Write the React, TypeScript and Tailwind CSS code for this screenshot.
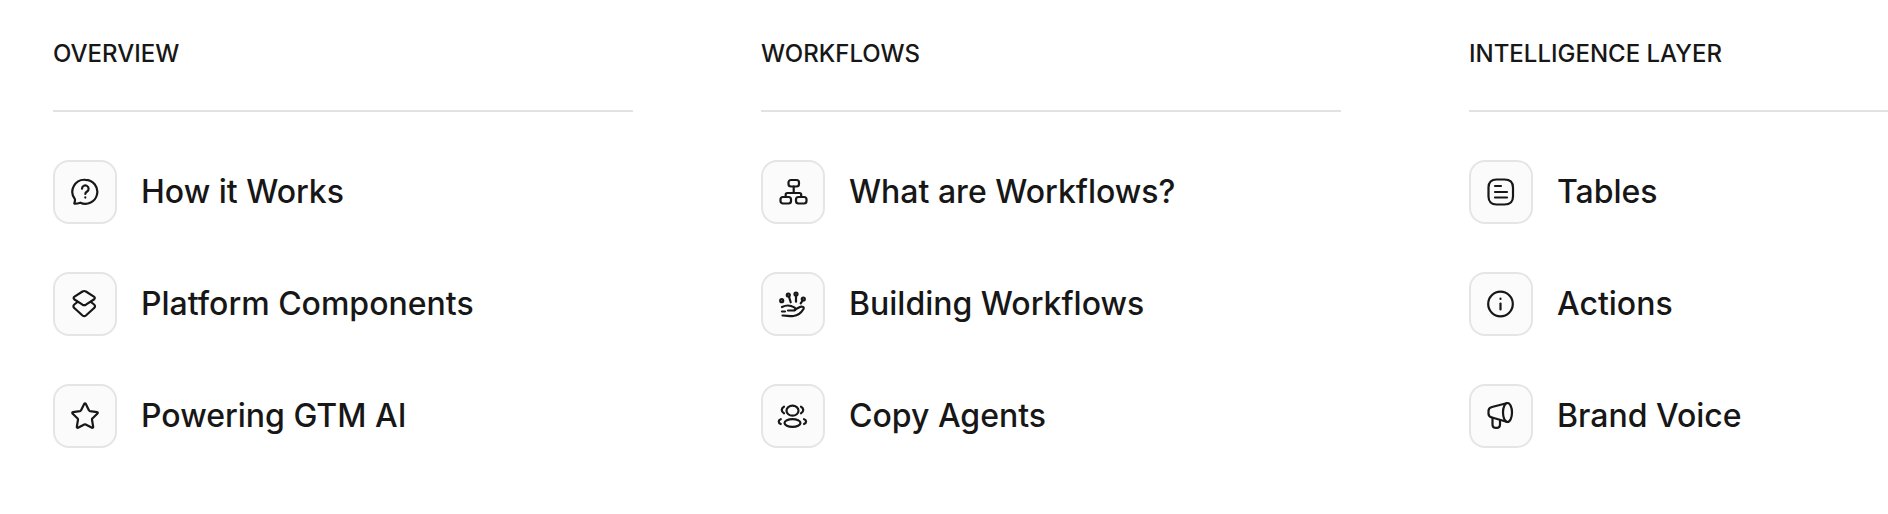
import React from "react";

const HelpIcon = () => (
  <>
    <path d="M16.300 3.800a12 12 0 1 1-5 22.900c-1.600.5-3.500.9-5.300 1-.6 0-.9-.5-.6-1 .5-1 .7-2.400.5-3.600A12 12 0 0 1 16.300 3.800Z" />
    <path d="M13 12.700a3.300 3.300 0 1 1 5.100 2.800c-1.100.7-1.800 1.300-1.800 2.500" />
    <path d="M16.300 21.400v.2" />
  </>
);

const LayersIcon = () => (
  <>
    <path d="M13.500 3.500c1-.6 2.400-.6 3.400 0l8 5.200c1.200.8 1.200 2 0 2.800l-8 5.200c-1 .6-2.400.6-3.400 0l-8-5.200c-1.200-.8-1.200-2 0-2.800Z" />
    <path d="M8.500 14 5.300 16.500c-1.200 1-1.200 2.600 0 3.500l8.200 7.500c1 .8 2.400.8 3.400 0l8.200-7.500c1.200-.9 1.200-2.500 0-3.500L21.900 14" />
  </>
);

const StarIcon = () => (
  <path
    transform="translate(0 -1)"
    d="M15.300 4.700c.3-.6 1.100-.6 1.400 0l3.200 6.500c.2.500.6.800 1.100.9l7.100 1c.7.1.9.900.4 1.400l-5.100 5c-.4.300-.5.800-.4 1.300l1.200 7.100c.1.700-.6 1.200-1.200.9l-6.300-3.300c-.4-.2-1-.2-1.400 0l-6.300 3.300c-.6.300-1.300-.2-1.200-.9l1.200-7.100c.1-.5-.1-1-.4-1.300l-5.100-5c-.5-.5-.3-1.300.4-1.400l7.100-1c.5-.1.900-.4 1.100-.9Z"
  />
);

const HierarchyIcon = () => (
  <>
    <rect x="11.500" y="4" width="10.500" height="6.500" rx="2.500" />
    <rect x="3.500" y="21" width="10.500" height="6.500" rx="2.500" />
    <rect x="19" y="21" width="10.500" height="6.500" rx="2.500" />
    <path d="M16.700 10.500V17M8.700 21v-2.500a1.500 1.500 0 0 1 1.500-1.500h12.500a1.500 1.500 0 0 1 1.500 1.500V21" />
  </>
);

const HandIcon = () => (
  <>
    <circle cx="4.700" cy="12.700" r="1.500" />
    <circle cx="11.300" cy="7" r="1.500" />
    <circle cx="19" cy="6" r="1.500" />
    <circle cx="26.300" cy="11" r="1.500" />
    <path d="M12 8.800l1.700 5.500M19 7.700v6M25.600 12.700l-1.900 2.600" />
    <path d="M5 19c3-1.500 6-2 9-1 2 .7 4 1.500 4.500 2.500.4 1-.5 2-2 2H11" />
    <path d="M18 21.500l5-2.500c2-1 4.500 0 3.500 2-1.500 2.500-5 6.500-10 7-3 .3-7-.5-11-.5" />
    <path d="M5 23.500h3" />
  </>
);

const PeopleIcon = () => (
  <>
    <ellipse cx="15.500" cy="10.700" rx="6" ry="5" />
    <ellipse cx="15.500" cy="23" rx="8" ry="3.800" />
    <path d="M7 6.700c-3 1.500-3 5 0 6.600M24 6.700c3 1.500 3 5 0 6.600" />
    <path d="M3.800 19.200c-2.800 1-2.800 3.800 0 4.800M27 19.200c2.800 1 2.800 3.800 0 4.800" />
  </>
);

const ListIcon = () => (
  <>
    <path d="M11.500 3.500h8c5.500 0 8.500 3 8.500 8v9c0 5-3 8-8.500 8h-8C6.500 28.500 3.500 25.500 3.500 20.500v-9c0-5 3-8 8-8Z" />
    <path d="M10 10h6M10 16h12M10 21.500h12" />
  </>
);

const InfoIcon = () => (
  <>
    <circle cx="15.500" cy="16" r="12.300" />
    <path d="M15.500 15.500v6" />
    <path d="M15.500 10.700v.3" />
  </>
);

const MegaphoneIcon = () => (
  <>
    <ellipse cx="22.500" cy="12.500" rx="4.500" ry="9.500" />
    <path d="M22.500 3 7 7C4.500 7.700 3.500 9 3.500 11v2.500c0 2 1 3.500 3.500 4L22.500 22" />
    <path d="M7.500 17.800v6.700c0 4.600 7.500 4.600 7.500 0V20" />
  </>
);

const sections = [
  {
    title: "Overview",
    items: [
      { label: "How it Works", icon: <HelpIcon /> },
      { label: "Platform Components", icon: <LayersIcon /> },
      { label: "Powering GTM AI", icon: <StarIcon /> },
    ],
  },
  {
    title: "Workflows",
    items: [
      { label: "What are Workflows?", icon: <HierarchyIcon /> },
      { label: "Building Workflows", icon: <HandIcon /> },
      { label: "Copy Agents", icon: <PeopleIcon /> },
    ],
  },
  {
    title: "Intelligence Layer",
    items: [
      { label: "Tables", icon: <ListIcon /> },
      { label: "Actions", icon: <InfoIcon /> },
      { label: "Brand Voice", icon: <MegaphoneIcon /> },
    ],
  },
];

export default function App() {
  return (
    <div className="h-[514px] w-full overflow-hidden bg-white font-['Inter',sans-serif] text-[#171717]">
      <div className="flex gap-[128px] pl-[53px] pt-[36px]">
        {sections.map((section) => (
          <div key={section.title} className="w-[580px] shrink-0">
            <h3 className="border-b-2 border-[#e2e2e2] pb-[38px] text-[24px] leading-[36px] font-[450] uppercase">
              {section.title}
            </h3>
            <ul className="mt-[48px] flex flex-col gap-[48px]">
              {section.items.map((item) => (
                <li key={item.label} className="flex items-center gap-[24px]">
                  <span className="flex h-[64px] w-[64px] items-center justify-center rounded-[16px] border-2 border-[#e5e5e5] bg-[#fbfbfb]">
                    <svg
                      width="32"
                      height="32"
                      viewBox="0 0 32 32"
                      fill="none"
                      stroke="currentColor"
                      strokeWidth="2.2"
                      strokeLinecap="round"
                      strokeLinejoin="round"
                    >
                      {item.icon}
                    </svg>
                  </span>
                  <span className="text-[32px] leading-[40px] font-[450]">{item.label}</span>
                </li>
              ))}
            </ul>
          </div>
        ))}
      </div>
    </div>
  );
}
